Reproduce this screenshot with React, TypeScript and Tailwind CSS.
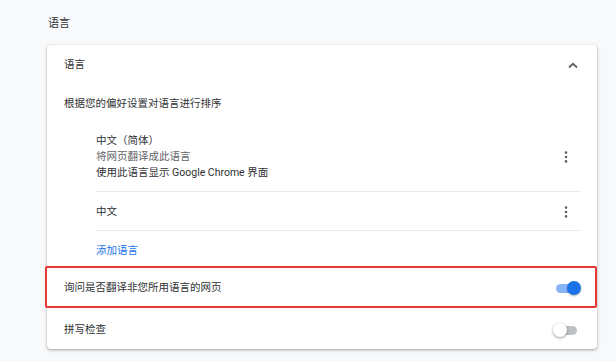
import React from "react";

const font = "font-['Roboto','Noto_Sans_CJK_SC',sans-serif]";

function MoreIcon() {
  return (
    <svg width="4" height="12" viewBox="0 0 4 12" className="shrink-0">
      <circle cx="2" cy="1.6" r="1.3" fill="#5f6368" />
      <circle cx="2" cy="6" r="1.3" fill="#5f6368" />
      <circle cx="2" cy="10.4" r="1.3" fill="#5f6368" />
    </svg>
  );
}

function Toggle({ on }: { on: boolean }) {
  return (
    <div className="relative h-[14px] w-[26px] shrink-0">
      <div
        className={
          on
            ? "absolute left-[1px] top-[3px] h-[9px] w-[23px] rounded-full bg-[#8ab4f8]"
            : "absolute left-[1px] top-[3px] h-[9px] w-[23px] rounded-full bg-[#bdc1c6]"
        }
      />
      <div
        className={
          on
            ? "absolute right-0 top-0 h-[14px] w-[14px] rounded-full bg-[#1a73e8] shadow-[0_1px_2px_rgba(0,0,0,0.3)]"
            : "absolute left-0 top-0 h-[14px] w-[14px] rounded-full bg-white shadow-[0_1px_3px_rgba(0,0,0,0.4)]"
        }
      />
    </div>
  );
}

export default function App() {
  return (
    <div className={`min-h-[361px] w-[616px] bg-[#f8f9fa] pl-[47px] pt-[15px] text-[10.5px] text-[#303134] ${font}`}>
      <div className="h-[16px] pl-[1px] pt-[1px] text-[11px] leading-[16px]">语言</div>

      <div className="mt-[14px] w-[550px] rounded-[4px] bg-white shadow-[0_1px_2px_rgba(60,64,67,0.3),0_1px_3px_1px_rgba(60,64,67,0.15)]">
        {/* header */}
        <div className="flex h-[39px] items-center justify-between pl-[17px] pr-[19px] pt-[1px]">
          <span className="leading-[16px]">语言</span>
          <svg width="10" height="7" viewBox="0 0 10 7">
            <path d="M1 5.5 L5 1.8 L9 5.5" stroke="#5f6368" strokeWidth="1.8" fill="none" />
          </svg>
        </div>

        <div className="flex h-[38px] items-center pl-[17px] pt-[1px] leading-[16px]">
          根据您的偏好设置对语言进行排序
        </div>

        {/* language list */}
        <div className="ml-[49px] mr-[16px]">
          <div className="flex items-center justify-between border-b border-[#e8eaed] pb-[10px] pt-[11px] pr-[13px]">
            <div className="flex flex-col leading-[16px]">
              <span>中文（简体）</span>
              <span className="text-[#5f6368]">将网页翻译成此语言</span>
              <span>使用此语言显示 Google Chrome 界面</span>
            </div>
            <MoreIcon />
          </div>
          <div className="flex h-[39px] items-center justify-between border-b border-[#e8eaed] pr-[13px] pt-[1px]">
            <span className="leading-[16px]">中文</span>
            <MoreIcon />
          </div>
          <div className="flex h-[35px] items-center pt-[4px] text-[#1a73e8]">添加语言</div>
        </div>

        {/* highlighted row */}
        <div className="-ml-[2px] flex h-[42px] items-center justify-between rounded-[2px] border-2 border-[#e53935] pl-[17px] pr-[14px] pt-[1px]">
          <span className="leading-[16px]">询问是否翻译非您所用语言的网页</span>
          <Toggle on />
        </div>

        <div className="flex h-[41px] items-center justify-between pl-[17px] pr-[18px] pt-[2px]">
          <span className="leading-[16px]">拼写检查</span>
          <Toggle on={false} />
        </div>
      </div>
    </div>
  );
}
